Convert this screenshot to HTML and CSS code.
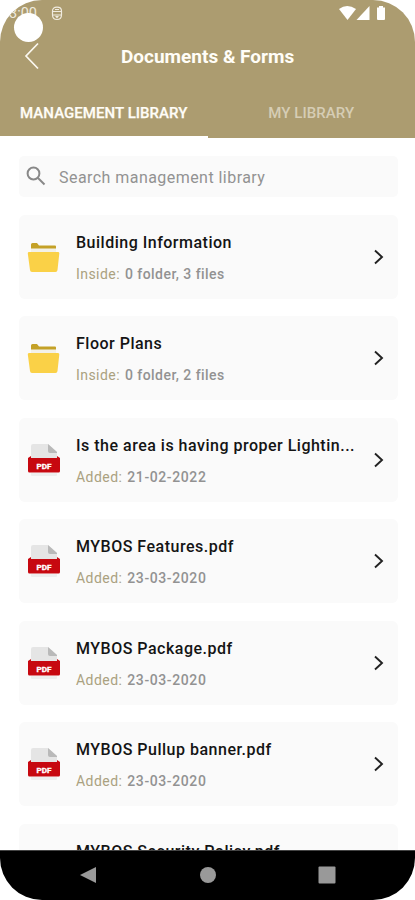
FILE: index.html
```html
<!DOCTYPE html>
<html lang="en">
<head>
<meta charset="utf-8">
<title>Documents &amp; Forms</title>
<link rel="stylesheet" href="styles.css">
</head>
<body>
<svg class="defs" aria-hidden="true">
  <symbol id="folder" viewBox="0 0 34 32">
    <path d="M4 7V3.500Q4 2 5.500 2H10L12 4.500H28Q29 4.500 29 5.500V8H4z" fill="#c4a127"/>
    <path d="M4 7.500H29V12H4z" fill="#f3f1e7"/>
    <path d="M2 11H31Q32.500 11 32.300 12.500L30.500 29Q30.300 31 28.500 31H5Q3.200 31 3 29L.8 12.500Q.6 11 2 11z" fill="#fad147"/>
  </symbol>
  <symbol id="pdf" viewBox="0 0 34 36">
    <path d="M4 31H30V33Q30 34 29 34H5Q4 34 4 33z" fill="#eeeeee"/>
    <path d="M4 18V4Q4 2 6 2H21L30 10V18z" fill="#e5e5e5"/>
    <path d="M21 2L30 10V11H23Q21 11 21 9z" fill="#b9b9b9"/>
    <path d="M1 16L4 14V16H30V14L33 16V29Q33 30.500 31.500 30.500H2.500Q1 30.500 1 29z" fill="#c70810"/>
    <text x="17" y="26.500" text-anchor="middle" textLength="15" lengthAdjust="spacingAndGlyphs" class="pdf-label">PDF</text>
  </symbol>
  <symbol id="chevron" viewBox="0 0 12 18"><path d="M2 2.500L9 9L2 15.500" fill="none" stroke="#222" stroke-width="1.900"/></symbol>
</svg>
<div class="phone">
  <header class="header">
    <div class="status">
      <span class="clock">3:00</span>
      <svg class="shield" viewBox="0 0 12 15"><path d="M1.500 5Q1.500 1.200 6 1.200T10.500 5V9Q10.500 13.500 6 13.500T1.500 9zM1.500 5.500H10.500M2 9H10M4 3.500H8" fill="none" stroke="#f0ebdf" stroke-width="1.200"/><path d="M4 10H8L6 12.500z" fill="#f0ebdf"/></svg>
      <svg class="signals" viewBox="0 0 48 16"><path d="M0 4Q8 -2 17 4L8.500 15z"/><path d="M30.500 1V15H17.500z"/><path d="M38 2.500H40V1H44V2.500H46V14Q46 15 45 15H39Q38 15 38 14z"/></svg>
      <span class="touch"></span>
    </div>
    <div class="titlebar">
      <svg class="back" viewBox="0 0 16 28"><path d="M14 1.500L2 14L14 26.500" fill="none" stroke="#fbf8f0" stroke-width="1.700"/></svg>
      <h1>Documents &amp; Forms</h1>
    </div>
    <nav class="tabs"><span class="tab active">MANAGEMENT LIBRARY</span><span class="tab">MY LIBRARY</span></nav>
  </header>
  <main class="content">
    <div class="search">
      <svg class="glass" viewBox="0 0 20 20"><circle cx="7.500" cy="7.500" r="5.900"/><path d="M12 12L18.500 18.500"/></svg>
      <span>Search management library</span>
    </div>
    <div class="card"><svg class="icon folder"><use href="#folder"/></svg><div class="info"><h2>Building Information</h2><p>Inside: <b>0 folder, 3 files</b></p></div><svg class="chevron"><use href="#chevron"/></svg></div>
    <div class="card"><svg class="icon folder"><use href="#folder"/></svg><div class="info"><h2>Floor Plans</h2><p>Inside: <b>0 folder, 2 files</b></p></div><svg class="chevron"><use href="#chevron"/></svg></div>
    <div class="card"><svg class="icon"><use href="#pdf"/></svg><div class="info"><h2>Is the area is having proper Lightin...</h2><p class="date">Added: <b>21-02-2022</b></p></div><svg class="chevron"><use href="#chevron"/></svg></div>
    <div class="card"><svg class="icon"><use href="#pdf"/></svg><div class="info"><h2>MYBOS Features.pdf</h2><p class="date">Added: <b>23-03-2020</b></p></div><svg class="chevron"><use href="#chevron"/></svg></div>
    <div class="card"><svg class="icon"><use href="#pdf"/></svg><div class="info"><h2>MYBOS Package.pdf</h2><p class="date">Added: <b>23-03-2020</b></p></div><svg class="chevron"><use href="#chevron"/></svg></div>
    <div class="card"><svg class="icon"><use href="#pdf"/></svg><div class="info"><h2>MYBOS Pullup banner.pdf</h2><p class="date">Added: <b>23-03-2020</b></p></div><svg class="chevron"><use href="#chevron"/></svg></div>
    <div class="card"><div class="icon"></div><div class="info"><h2>MYBOS Security Policy.pdf</h2></div></div>
  </main>
  <footer class="navbar">
    <svg viewBox="0 0 18 18"><path d="M17 1V17L1 9z"/></svg>
    <svg viewBox="0 0 18 18"><circle cx="9" cy="9" r="8"/></svg>
    <svg viewBox="0 0 18 18"><rect x=".5" y=".5" width="17" height="17" rx="1"/></svg>
  </footer>
</div>
</body>
</html>
```
FILE: styles.css
```css
* { box-sizing: border-box; }
body { margin: 0; background: #fff; font-family: Roboto, sans-serif; }
h1, h2, p { margin: 0; }
.defs { position: absolute; width: 0; height: 0; }
.phone { width: 415px; height: 900px; border-radius: 42px; overflow: hidden; display: flex; flex-direction: column; background: #fff; }
.header { flex: none; height: 138px; background: #ac9c70; display: flex; flex-direction: column; }
.status { height: 28px; position: relative; display: flex; align-items: flex-start; padding: 6px 28px 0 9px; }
.clock { width: 42px; font-size: 14.500px; line-height: 16px; color: #f0ebdf; }
.shield { width: 12px; height: 15px; }
.signals { width: 48px; height: 16px; margin: -1px 0 0 auto; fill: #fff; }
.touch { position: absolute; left: 14px; top: 13px; width: 29px; height: 29px; border-radius: 50%; background: #fff; }
.titlebar { height: 58px; display: flex; align-items: center; padding-left: 24px; }
.back { width: 16px; height: 28px; margin-top: -2px; }
.titlebar h1 { margin: -1px 0 0 81px; font-size: 19px; font-weight: 700; line-height: 24px; color: #fffdf7; white-space: nowrap; }
.tabs { display: flex; height: 52px; font-size: 15px; font-weight: 500; }
.tab { width: 207.500px; display: flex; align-items: center; justify-content: center; padding-top: 3px; color: #d6cdb5; letter-spacing: .05px; border-bottom: 2px solid #ac9c70; }
.active { color: #fffdf7; border-color: #fff; -webkit-text-stroke: .25px #fffdf7; }
.content { flex: 1; min-height: 0; overflow: hidden; padding: 18px 17px 0 19px; display: flex; flex-direction: column; }
.search { flex: none; height: 41px; margin-bottom: 17.800px; display: flex; align-items: center; padding-left: 7px; border-radius: 5px; background: #fafafa; color: #929292; font-size: 16px; letter-spacing: .45px; }
.search span { padding-top: 1px; }
.glass { width: 20px; height: 20px; margin: -2px 13px 0 0; fill: none; stroke: #888; stroke-width: 2; }
.card { flex: none; height: 84px; margin-bottom: 17.500px; padding: 0 13px 0 8px; display: flex; align-items: center; border-radius: 6px; background: #fafafa; }
.icon { width: 34px; height: 36px; flex: none; }
.folder { height: 32px; }
.info { flex: 1; height: 84px; padding: 17px 0 0 15px; white-space: nowrap; }
.info h2 { font-size: 16px; font-weight: 500; line-height: 22px; letter-spacing: .5px; color: #141414; }
.info p { margin-top: 10px; font-size: 14px; line-height: 20px; letter-spacing: .45px; color: #aaa180; }
.info b { margin-left: 1px; font-weight: 500; color: #929292; }
.info .date b { letter-spacing: .6px; }
.chevron { width: 12px; height: 18px; flex: none; }
.pdf-label { font: 700 7px Roboto, sans-serif; fill: #fff; stroke: #fff; stroke-width: .3px; }
.navbar { flex: none; height: 50px; display: flex; justify-content: space-between; align-items: center; padding: 0 79px; background: #000; border-top: 1px solid #444; }
.navbar svg { width: 18px; height: 18px; margin-top: -1px; fill: #999; }
```
